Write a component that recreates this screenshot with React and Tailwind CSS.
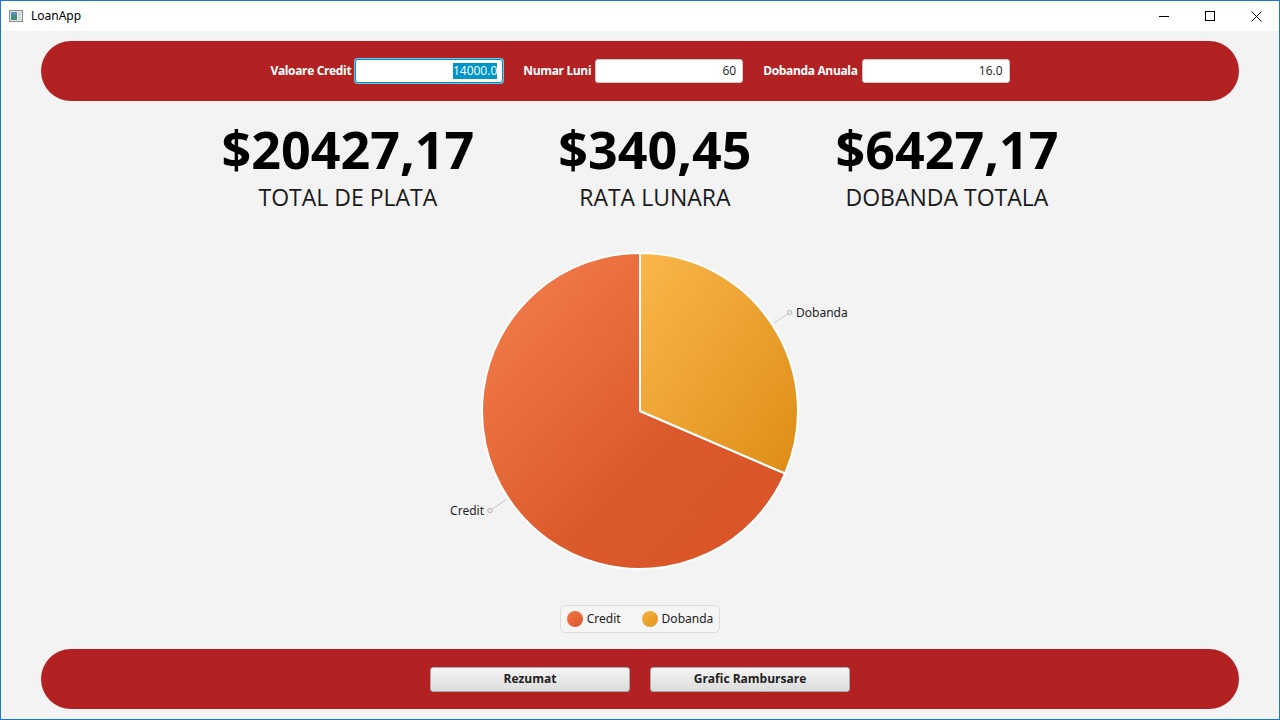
import React from "react";

const stats = [
  { value: "$20427,17", label: "TOTAL DE PLATA" },
  { value: "$340,45", label: "RATA LUNARA" },
  { value: "$6427,17", label: "DOBANDA TOTALA" },
];

const fields = [
  { label: "Valoare Credit", value: "14000.0", focused: true },
  { label: "Numar Luni", value: "60" },
  { label: "Dobanda Anuala", value: "16.0" },
];

function TitleBar() {
  return (
    <div className="h-[30px] bg-white flex items-center shrink-0">
      <svg width="14" height="12" viewBox="0 0 14 12" className="ml-[8px]">
        <rect x="0.5" y="0.5" width="13" height="11" fill="#e8e8e8" stroke="#8a8a8a" />
        <rect x="2" y="2" width="6" height="8" fill="#3f8f7a" />
        <rect x="2" y="2" width="6" height="3" fill="#5b8fc4" />
        <rect x="9" y="2" width="3" height="8" fill="#cfd8dc" />
      </svg>
      <span className="ml-[8px] text-[12px] text-black" style={{ fontFamily: "'Noto Sans', sans-serif" }}>LoanApp</span>
      <div className="ml-auto flex h-full">
        <div className="w-[46px] h-full flex items-center justify-center">
          <svg width="10" height="10" viewBox="0 0 10 10"><path d="M0 5.5H10" stroke="#000" strokeWidth="1" /></svg>
        </div>
        <div className="w-[46px] h-full flex items-center justify-center">
          <svg width="10" height="10" viewBox="0 0 10 10"><rect x="0.5" y="0.5" width="9" height="9" fill="none" stroke="#000" /></svg>
        </div>
        <div className="w-[46px] h-full flex items-center justify-center">
          <svg width="11" height="11" viewBox="0 0 11 11"><path d="M0.5 0.5L10.5 10.5M10.5 0.5L0.5 10.5" stroke="#000" strokeWidth="1" /></svg>
        </div>
      </div>
    </div>
  );
}

function PieChart() {
  const cx = 220, cy = 171, r = 158;
  const ex = 365.1, ey = 233.5;
  return (
    <svg width="440" height="340" viewBox="0 0 440 340" className="block">
      <defs>
        <linearGradient id="gCredit" x1="0" y1="0" x2="1" y2="1">
          <stop offset="0" stopColor="#f5804f" />
          <stop offset="0.6" stopColor="#db5a2b" />
          <stop offset="1" stopColor="#d95326" />
        </linearGradient>
        <linearGradient id="gDob" x1="0" y1="0" x2="1" y2="1">
          <stop offset="0" stopColor="#fab74b" />
          <stop offset="1" stopColor="#de8d15" />
        </linearGradient>
      </defs>
      <path d={`M${cx} ${cy} L${ex} ${ey} A${r} ${r} 0 1 1 ${cx} ${cy - r} Z`} fill="url(#gCredit)" stroke="#fff" strokeWidth="2" />
      <path d={`M${cx} ${cy} L${cx} ${cy - r} A${r} ${r} 0 0 1 ${ex} ${ey} Z`} fill="url(#gDob)" stroke="#fff" strokeWidth="2" />
      <line x1="354" y1="83" x2="369" y2="73" stroke="#c8c8c8" strokeWidth="1" />
      <circle cx="369.5" cy="72.5" r="2.3" fill="#e6e6e6" stroke="#bdbdbd" strokeWidth="1" />
      <text x="376" y="77" fontSize="12" fill="#222" style={{ fontFamily: "'Noto Sans', sans-serif" }}>Dobanda</text>
      <line x1="87" y1="259" x2="71" y2="270" stroke="#c8c8c8" strokeWidth="1" />
      <circle cx="70" cy="270.5" r="2.3" fill="#e6e6e6" stroke="#bdbdbd" strokeWidth="1" />
      <text x="64" y="275" fontSize="12" fill="#222" textAnchor="end" style={{ fontFamily: "'Noto Sans', sans-serif" }}>Credit</text>
    </svg>
  );
}

export default function App() {
  return (
    <div className="w-[1280px] h-[720px] border border-[#1979ca] flex flex-col" style={{ fontFamily: "'Open Sans', sans-serif" }}>
      <TitleBar />
      <div className="flex-1 bg-[#f3f3f3] px-[40px] pt-[10px] pb-[10px] flex flex-col">
        {/* Inputs */}
        <div className="h-[60px] rounded-full bg-[#b22222] flex items-center justify-center gap-[20px] shrink-0">
          {fields.map((f) => (
            <div key={f.label} className="flex items-center gap-[4px]">
              <span className="text-white text-[12px] font-bold tracking-[-0.35px]">{f.label}</span>
              <div
                className={
                  f.focused
                    ? "w-[148px] h-[24px] bg-white rounded-[3px] border border-[#0093cc] shadow-[0_0_0_1px_#6cc3e6] flex items-center justify-end pr-[5px]"
                    : "w-[148px] h-[24px] bg-white rounded-[3px] border border-[#c7c7c7] flex items-center justify-end pr-[6px]"
                }
              >
                <span className={f.focused ? "text-[12px] bg-[#0096c9] text-white leading-[16px]" : "text-[12px] text-[#222] leading-[16px]"}>
                  {f.value}
                </span>
              </div>
            </div>
          ))}
        </div>

        {/* Stats */}
        <div className="flex justify-center gap-[84px] mt-[15px] shrink-0">
          {stats.map((s) => (
            <div key={s.label} className="flex flex-col items-center">
              <span className="text-[52px] font-bold leading-[66px] text-black">{s.value}</span>
              <span className="text-[23px] leading-[30px] text-[#1a1a1a]">{s.label}</span>
            </div>
          ))}
        </div>

        {/* Chart */}
        <div className="flex justify-center mt-[28px] shrink-0">
          <PieChart />
        </div>

        {/* Legend */}
        <div className="flex justify-center mt-[25px] shrink-0">
          <div className="h-[28px] px-[6px] flex items-center gap-[21px] border border-[#dcdcdc] rounded-[5px] bg-[#f5f5f5]" style={{ fontFamily: "'Noto Sans', sans-serif" }}>
            <div className="flex items-center gap-[4px]">
              <span className="w-[16px] h-[16px] rounded-full bg-gradient-to-br from-[#f07848] to-[#da5528]" />
              <span className="text-[12px] text-[#222]">Credit</span>
            </div>
            <div className="flex items-center gap-[4px]">
              <span className="w-[16px] h-[16px] rounded-full bg-gradient-to-br from-[#f7b33e] to-[#e0941c]" />
              <span className="text-[12px] text-[#222]">Dobanda</span>
            </div>
          </div>
        </div>

        <div className="flex-1" />

        {/* Buttons */}
        <div className="h-[60px] rounded-full bg-[#b22222] flex items-center justify-center gap-[20px] shrink-0">
          {["Rezumat", "Grafic Rambursare"].map((b) => (
            <button
              key={b}
              className="w-[200px] h-[25px] rounded-[3px] border border-[#a9a9a9] bg-gradient-to-b from-[#f5f5f5] to-[#dcdcdc] text-[12px] font-bold text-[#222]"
            >
              {b}
            </button>
          ))}
        </div>
      </div>
    </div>
  );
}
